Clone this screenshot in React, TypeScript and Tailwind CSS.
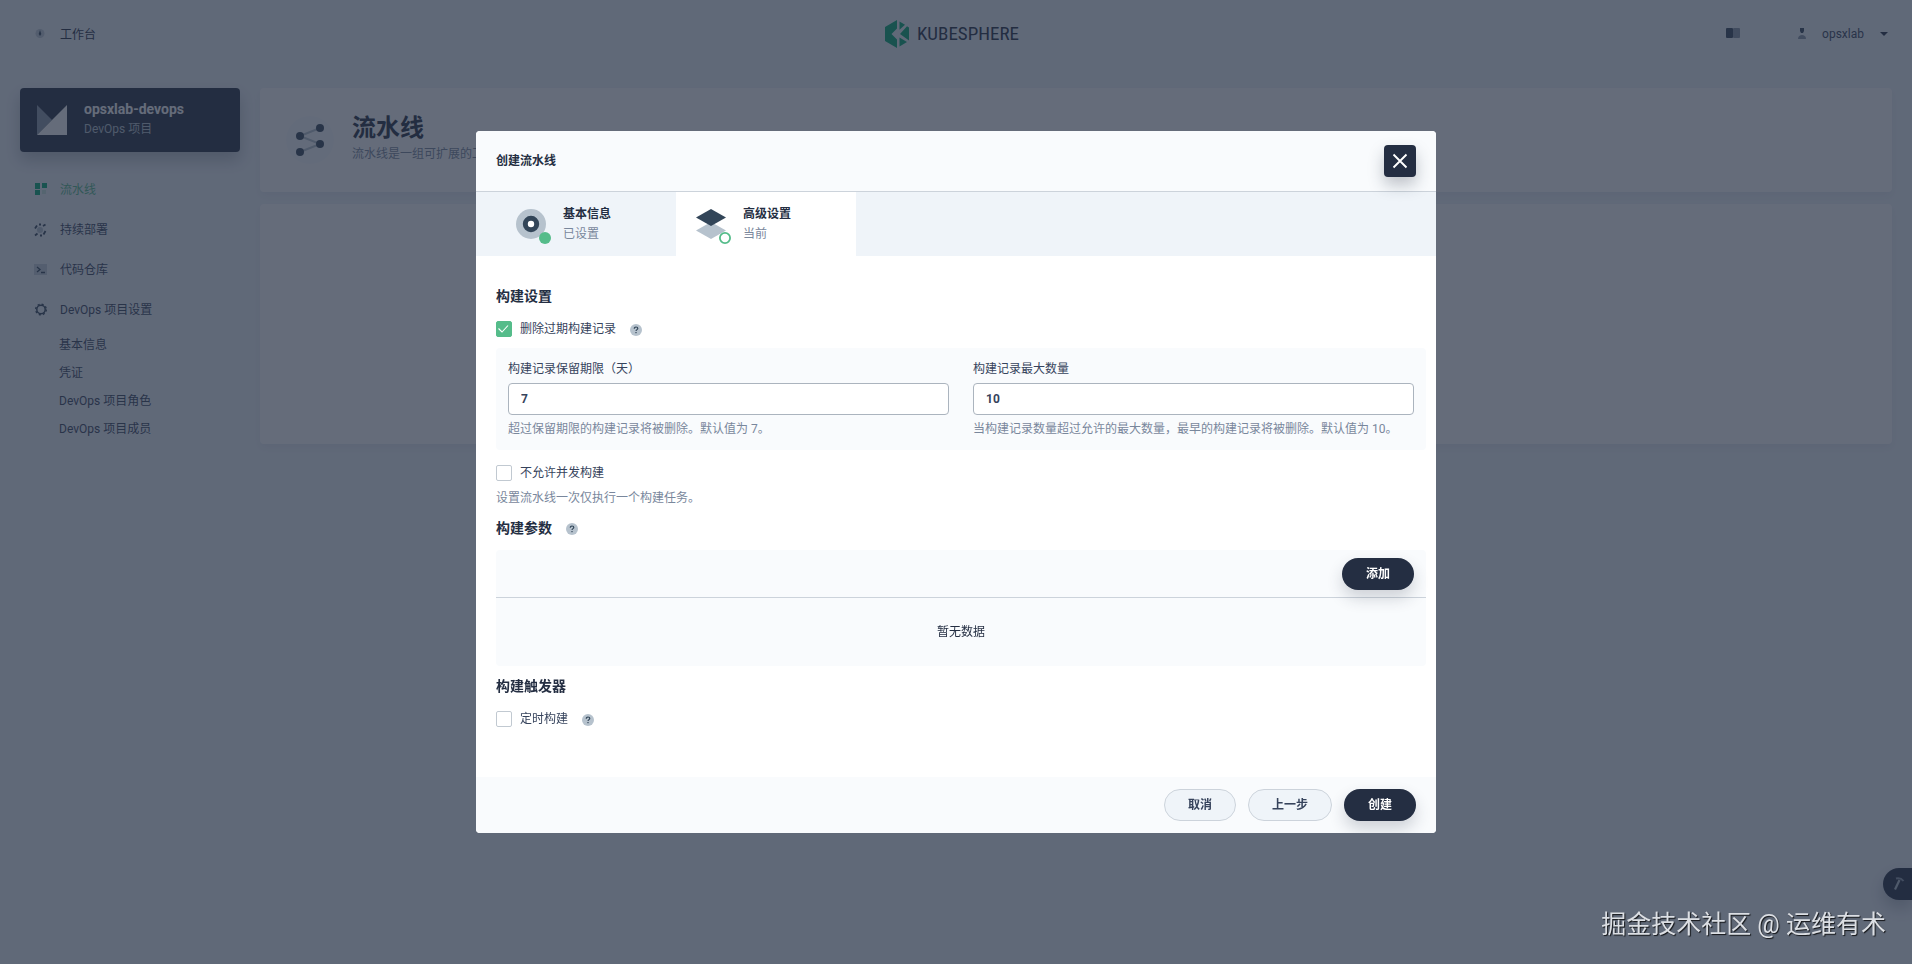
import { useState } from 'react'
import type { ReactNode } from 'react'

const subItems = ['基本信息', '凭证', 'DevOps 项目角色', 'DevOps 项目成员']

function HelpIcon() {
  return (
    <svg className="ml-3.5 mt-0.5 size-3 shrink-0" viewBox="0 0 12 12" aria-hidden="true">
      <circle cx="6" cy="6" r="6" fill="#b6c2cd" />
      <path d="M4.300 4.700c0-1 .7-1.700 1.700-1.700s1.800.6 1.800 1.500C7.800 5.600 6 5.700 6 7" fill="none" stroke="#324558" strokeWidth="1.200" />
      <rect x="5.400" y="8" width="1.200" height="1.200" fill="#324558" />
    </svg>
  )
}

function NavItem({ icon, label, active }: { icon: ReactNode; label: string; active?: boolean }) {
  return (
    <li>
      <a href="#" className={`flex h-10 items-center gap-3 pl-3.5 ${active ? 'text-[#55bc8a]' : 'text-[#36435c]'}`}>
        <svg className="size-3.5" viewBox="0 0 14 14" aria-hidden="true">{icon}</svg>
        {label}
      </a>
    </li>
  )
}

function CheckRow({ id, label, checked = false, help }: { id: string; label: string; checked?: boolean; help?: boolean }) {
  const [on, setOn] = useState(checked)
  return (
    <div className="flex h-[22px] items-center">
      <span className="grid size-4">
        <input
          id={id}
          type="checkbox"
          checked={on}
          onChange={() => setOn(!on)}
          className="col-start-1 row-start-1 size-4 appearance-none rounded-xs border border-[#c1c9d1] bg-white checked:border-[#55bc8a] checked:bg-[#55bc8a]"
        />
        {on && (
          <svg className="pointer-events-none col-start-1 row-start-1 size-4" viewBox="0 0 16 16" aria-hidden="true">
            <path d="M2.500 7.500l3.500 3.500 6-6.500" fill="none" stroke="#fff" strokeWidth="1.100" />
          </svg>
        )}
      </span>
      <label htmlFor={id} className="ml-2 text-[#36435c]">{label}</label>
      {help && <HelpIcon />}
    </div>
  )
}

function NumberField({ id, label, value, hint }: { id: string; label: string; value: string; hint: string }) {
  return (
    <div className="flex-1">
      <label htmlFor={id} className="block text-[#36435c]">{label}</label>
      <input
        id={id}
        defaultValue={value}
        className="mt-1 block h-8 w-full rounded border border-[#abb4be] bg-white px-3 font-bold text-[#36435c]"
      />
      <p className="mt-1 text-[#79879c]">{hint}</p>
    </div>
  )
}

function Step({ icon, title, status, active }: { icon: ReactNode; title: string; status: string; active?: boolean }) {
  return (
    <li className={`flex h-16 w-[180px] items-center gap-3 px-[15px] ${active ? 'bg-white' : ''}`}>
      <svg className="size-10" viewBox="0 0 40 40" aria-hidden="true">{icon}</svg>
      <div>
        <p className="font-bold text-[#242e42]">{title}</p>
        <p className="text-[#79879c]">{status}</p>
      </div>
    </li>
  )
}

function Sidebar() {
  return (
    <aside className="w-60 shrink-0 pl-5">
      <div className="flex h-16 items-center rounded bg-[#242e42] pl-4 shadow-[0_8px_16px_0_rgba(36,46,66,0.28)]">
        <svg className="h-[30px] w-8" viewBox="0 0 32 30" aria-hidden="true">
          <path d="M1 0l15 15L1 30z" fill="#8b97a8" />
          <path d="M31 0v30H1z" fill="#fff" />
        </svg>
        <div className="ml-4 pb-0.5">
          <p className="text-sm leading-5 font-bold text-white">opsxlab-devops</p>
          <p className="text-[#b6c2cd]">DevOps 项目</p>
        </div>
      </div>
      <nav className="mt-[18px]">
        <ul>
          <NavItem
            active
            label="流水线"
            icon={
              <>
                <path d="M1 0h5v6H1zM8 0h5v5H8zM1 7h5v5H1z" fill="#00aa72" />
                <path d="M8 7h4v4H8z" fill="#55bc8a" opacity=".25" />
              </>
            }
          />
          <NavItem
            label="持续部署"
            icon={
              <>
                <circle cx="6" cy="7" r="3" fill="#b6c2cd" />
                <path d="M1 5.500L3 2.500M5 1.500h2M9 3l2.500-1.500M11.500 8l-2 3.500M8 12.500H6M1 12.500l2.500-2" fill="none" stroke="#324558" strokeWidth="1.800" />
              </>
            }
          />
          <NavItem
            label="代码仓库"
            icon={
              <>
                <path d="M0 1h13v11H0z" fill="#b6c2cd" opacity=".7" />
                <path d="M3 4l3 2.500-3 2.500M7 9.500h4" fill="none" stroke="#324558" strokeWidth="1.300" />
              </>
            }
          />
          <NavItem
            label="DevOps 项目设置"
            icon={
              <>
                <circle cx="7" cy="6.500" r="5.300" fill="none" stroke="#324558" strokeWidth="1.400" strokeDasharray="2.080 2.080" />
                <circle cx="7" cy="6.500" r="4.200" fill="none" stroke="#324558" strokeWidth="1.500" />
              </>
            }
          />
        </ul>
        <ul className="pt-px">
          {subItems.map((item) => (
            <li key={item}>
              <a href="#" className="flex h-7 items-center pl-[39px] text-[#36435c]">{item}</a>
            </li>
          ))}
        </ul>
      </nav>
    </aside>
  )
}

function Header() {
  return (
    <header className="flex h-[68px] items-center justify-between px-5 text-[#36435c]">
      <div className="flex-1">
        <a href="#" className="flex items-center gap-3 pt-0.5 pl-3.5 text-[#242e42]">
          <svg className="size-3.5" viewBox="0 0 14 14" aria-hidden="true">
            <circle cx="6" cy="5.500" r="4.500" fill="#b6c2cd" opacity=".8" />
            <path d="M6 2l1.300 4L6 8 4.700 6z" fill="#324558" />
          </svg>
          工作台
        </a>
      </div>
      <a href="#" className="mr-1 flex items-center gap-2 text-[#242e42]">
        <svg className="h-7 w-6" viewBox="0 0 24 28" aria-hidden="true">
          <path d="M12 0v8.500L6.500 14l5.500 5.500V28L0 21V7z" fill="#00a971" />
          <path d="M14.500 1.500L20 4.700l-5.500 5zM22 6.300L24 7.500v13l-9-6.500zM14.500 17.500l7.500 4.600-7.500 4.400z" fill="#00a971" />
        </svg>
        <span className="font-['Liberation_Sans_Narrow','Roboto_Condensed',Roboto,sans-serif] text-[19px] leading-7">KUBESPHERE</span>
      </a>
      <div className="flex flex-1 items-center justify-end pr-1">
        <button type="button" aria-label="文档">
          <svg className="h-3.5 w-4" viewBox="0 0 16 14" aria-hidden="true">
            <rect x="1" y="1" width="7" height="10" rx="1" fill="#324558" />
            <rect x="8" y="1" width="7" height="10" rx="1" fill="#8794a5" />
          </svg>
        </button>
        <button type="button" className="ml-[54px] flex items-center">
          <svg className="size-3.5" viewBox="0 0 14 14" aria-hidden="true">
            <path d="M5 1h4v3L8 6H6L5 4z" fill="#324558" />
            <path d="M3 12c0-3 2-4 4-4s4 1 4 4z" fill="#8794a5" />
          </svg>
          <span className="ml-[13px]">opsxlab</span>
          <svg className="ml-4 h-1 w-2" viewBox="0 0 8 4" aria-hidden="true">
            <path d="M0 0h8L4 4z" fill="#242e42" />
          </svg>
        </button>
      </div>
    </header>
  )
}

function CreateDialog() {
  return (
    <div role="dialog" aria-label="创建流水线" className="w-full max-w-[960px] overflow-hidden rounded bg-white">
      <div className="flex h-[61px] items-center justify-between border-b border-[#ccd3db] bg-[#f9fbfd] px-5">
        <h2 className="font-bold text-[#242e42]">创建流水线</h2>
        <button
          type="button"
          aria-label="关闭"
          className="flex size-8 items-center justify-center rounded bg-[#242e42] shadow-[0_8px_16px_0_rgba(36,46,66,0.28)]"
        >
          <svg className="size-4" viewBox="0 0 16 16" aria-hidden="true">
            <path d="M1.500 1.500l13 13M14.500 1.500l-13 13" stroke="#fff" strokeWidth="1.900" />
          </svg>
        </button>
      </div>
      <ol className="flex bg-[#eff4f9] pl-5">
        <Step
          title="基本信息"
          status="已设置"
          icon={
            <>
              <circle cx="20" cy="20" r="15" fill="#b6c2cd" />
              <circle cx="20" cy="20" r="5.700" fill="#fff" stroke="#324558" strokeWidth="5" />
              <circle cx="34" cy="34" r="6" fill="#55bc8a" />
            </>
          }
        />
        <Step
          active
          title="高级设置"
          status="当前"
          icon={
            <>
              <path d="M20 18l15 8.500L20 35 5 26.500z" fill="#b6c2cd" />
              <path d="M20 5l15 8.500L20 22 5 13.500z" fill="#324558" />
              <circle cx="34" cy="34" r="5.100" fill="#fff" stroke="#55bc8a" strokeWidth="1.800" />
            </>
          }
        />
      </ol>
      <form>
        <div className="pt-[30px] pr-2.5 pb-[47px] pl-5">
          <h3 className="text-sm leading-5 font-bold text-[#242e42]">构建设置</h3>
          <div className="mt-3">
            <CheckRow id="discard" label="删除过期构建记录" checked help />
          </div>
          <div className="mt-2 flex gap-6 rounded bg-[#f9fbfd] px-3 py-[11px]">
            <NumberField id="days" label="构建记录保留期限（天）" value="7" hint="超过保留期限的构建记录将被删除。默认值为 7。" />
            <NumberField id="count" label="构建记录最大数量" value="10" hint="当构建记录数量超过允许的最大数量，最早的构建记录将被删除。默认值为 10。" />
          </div>
          <div className="mt-3">
            <CheckRow id="concurrent" label="不允许并发构建" />
          </div>
          <p className="mt-1 text-[#79879c]">设置流水线一次仅执行一个构建任务。</p>
          <h3 className="mt-2.5 flex items-center text-sm leading-5 font-bold text-[#242e42]">
            构建参数
            <HelpIcon />
          </h3>
          <div className="mt-3 rounded bg-[#f9fbfd]">
            <div className="flex h-12 items-center justify-end border-b border-[#ccd3db] px-3">
              <button type="button" className="h-8 rounded-full bg-[#242e42] px-6 font-bold text-white shadow-[0_8px_16px_0_rgba(36,46,66,0.2)]">添加</button>
            </div>
            <p className="flex h-17 items-center justify-center text-[#242e42]">暂无数据</p>
          </div>
          <h3 className="mt-2.5 text-sm leading-5 font-bold text-[#242e42]">构建触发器</h3>
          <div className="mt-3">
            <CheckRow id="timer" label="定时构建" help />
          </div>
        </div>
        <div className="flex justify-end gap-3 bg-[#f9fbfd] px-5 py-3 font-bold">
          <button type="button" className="h-8 rounded-full border border-[#ccd3db] bg-[#eff4f9] px-[23px] text-[#36435c]">取消</button>
          <button type="button" className="h-8 rounded-full border border-[#ccd3db] bg-[#eff4f9] px-[23px] text-[#36435c]">上一步</button>
          <button type="button" className="h-8 rounded-full bg-[#242e42] px-6 text-white shadow-[0_8px_16px_0_rgba(36,46,66,0.2)]">创建</button>
        </div>
      </form>
    </div>
  )
}

export default function App() {
  return (
    <div className="min-h-screen bg-[#eff4f9] font-[Roboto,'Noto_Sans_CJK_SC',sans-serif] text-xs leading-5">
      <Header />
      <div className="flex gap-5 pt-5 pr-5">
        <Sidebar />
        <main className="min-w-0 flex-1">
          <section className="flex h-26 items-center rounded bg-white pl-[26px] shadow-[0_4px_8px_0_rgba(36,46,66,0.06)]">
            <span className="flex size-12 items-center justify-center rounded-full bg-[#f9fbfd]">
              <svg className="h-8 w-7" viewBox="0 0 28 32" aria-hidden="true">
                <path d="M24 4L4 12l20 8L4 28" fill="none" stroke="#b6c2cd" strokeWidth="2" />
                <g fill="#324558">
                  <circle cx="24" cy="4" r="4" />
                  <circle cx="4" cy="12" r="4" />
                  <circle cx="24" cy="20" r="4" />
                  <circle cx="4" cy="28" r="4" />
                </g>
              </svg>
            </span>
            <div className="ml-[18px] pb-1">
              <h1 className="text-2xl leading-8 font-bold text-[#242e42]">流水线</h1>
              <p className="text-[#79879c]">流水线是一组可扩展的工</p>
            </div>
          </section>
          <section className="mt-3 h-60 rounded bg-white shadow-[0_4px_8px_0_rgba(36,46,66,0.06)]" />
        </main>
      </div>
      <button
        type="button"
        aria-label="工具箱"
        className="fixed right-0 bottom-16 flex h-8 w-[29px] items-center rounded-l-full bg-[#242e42] pl-2 shadow-[0_8px_16px_0_rgba(36,46,66,0.28)]"
      >
        <svg className="size-3.5" viewBox="0 0 14 14" aria-hidden="true">
          <path d="M8.500 3L4 12.500" stroke="#b6c2cd" strokeWidth="2.200" />
          <path d="M5 1.500c3-.8 5.500 0 7.500 2.500" fill="none" stroke="#8b97a8" strokeWidth="2" />
        </svg>
      </button>
      <div className="fixed inset-0 flex items-center justify-center bg-[#232d41]/70">
        <CreateDialog />
      </div>
      <p className="fixed right-[26px] bottom-[21px] text-[25px] leading-9 text-[#dcdfe4] [text-shadow:1px_1px_1px_rgba(0,0,0,0.8)]">
        掘金技术社区 @ 运维有术
      </p>
    </div>
  )
}
